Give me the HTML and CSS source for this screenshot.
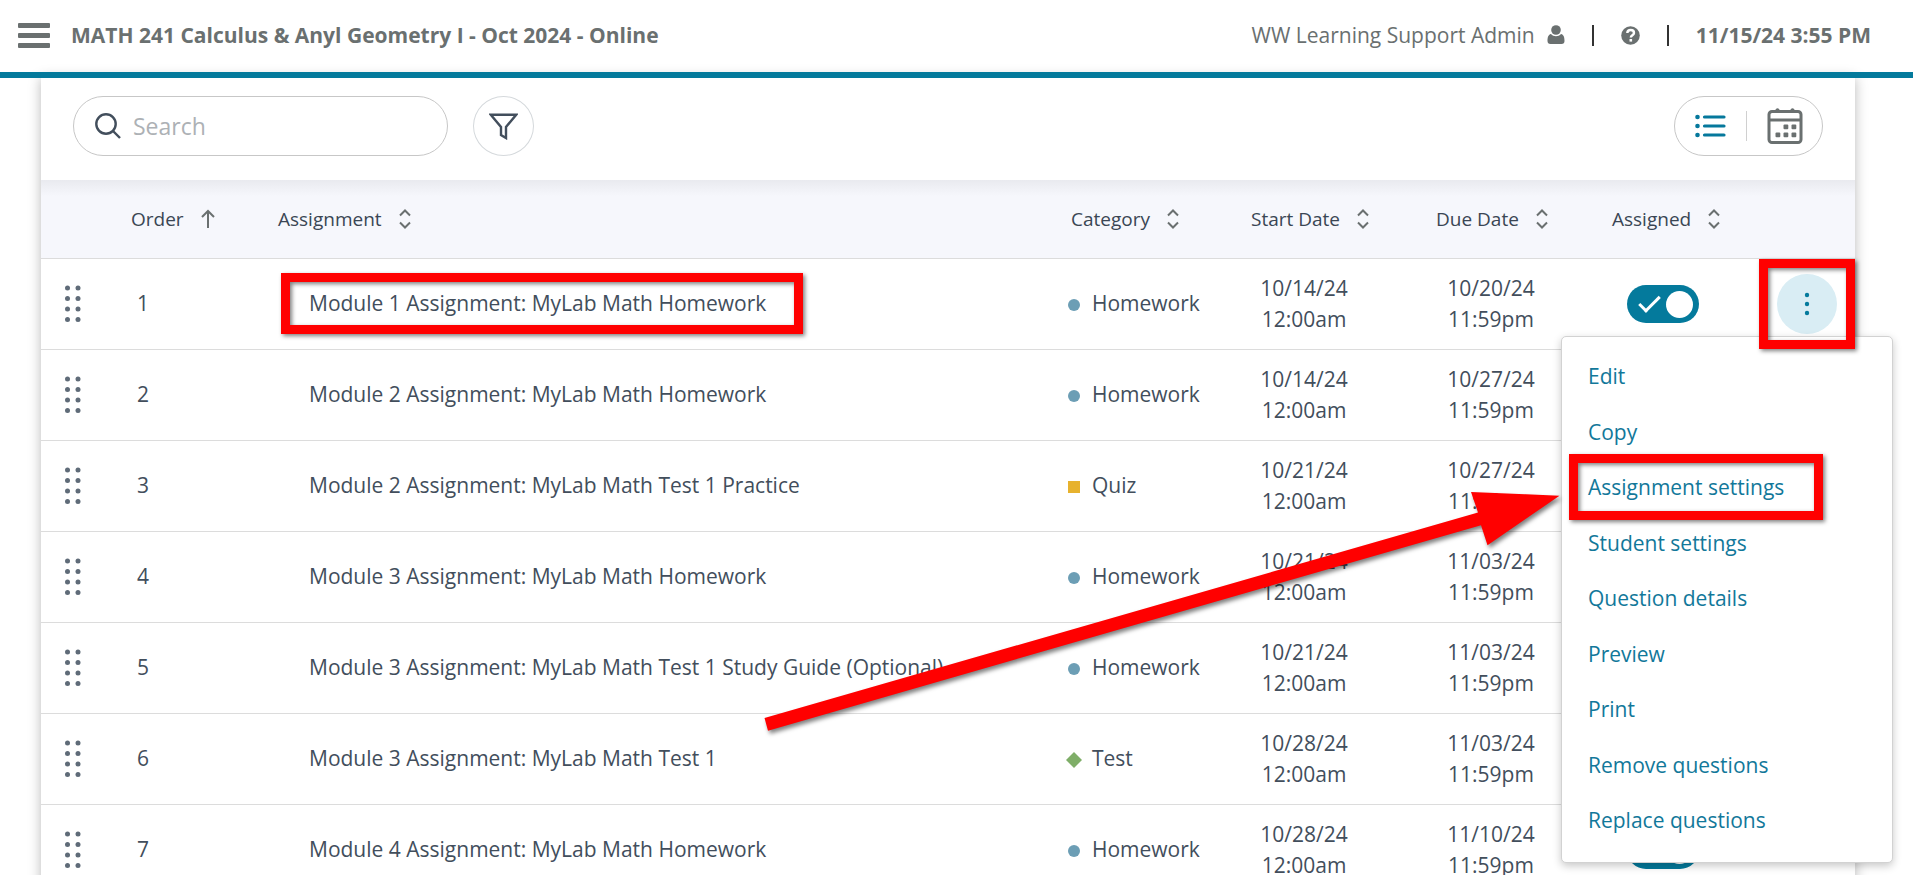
FILE: index.html
```html
<!DOCTYPE html>
<html lang="en">
<head>
<meta charset="utf-8">
<title>Assignment Manager</title>
<link rel="stylesheet" href="styles.css">
</head>
<body>
<svg class="sprite" aria-hidden="true">
  <symbol id="sort" viewBox="0 0 12 20"><path d="M1 6.500 6 1.500l5 5M1 13.500l5 5 5-5" fill="none" stroke="currentColor" stroke-width="2"/></symbol>
  <symbol id="grip" viewBox="0 0 16 38"><g fill="#5f6b78"><circle cx="2.500" cy="3" r="2.500"/><circle cx="13" cy="3" r="2.500"/><circle cx="2.500" cy="13.500" r="2.500"/><circle cx="13" cy="13.500" r="2.500"/><circle cx="2.500" cy="24" r="2.500"/><circle cx="13" cy="24" r="2.500"/><circle cx="2.500" cy="34.500" r="2.500"/><circle cx="13" cy="34.500" r="2.500"/></g></symbol>
  <symbol id="dots" viewBox="0 0 60 60"><circle cx="30" cy="21" r="2.200"/><circle cx="30" cy="30" r="2.200"/><circle cx="30" cy="39" r="2.200"/></symbol>
</svg>
<header class="topbar">
  <button class="menu-button" aria-label="Menu"><span></span><span></span><span></span></button>
  <h1>MATH 241 Calculus &amp; Anyl Geometry I - Oct 2024 - Online</h1>
  <div class="account">
    <a class="user" href="#">WW Learning Support Admin
      <svg width="18" height="20" viewBox="0 0 18 20"><circle cx="9" cy="5" r="4.800"/><path d="M4 9C1 9.500.5 13 .5 16c0 2 1 3 3 3h11c2 0 3-1 3-3 0-3-.5-6.500-3.500-7-2.500 3-7.500 3-10 0z"/></svg></a>
    <span class="bar"></span>
    <a class="help" href="#" aria-label="Help"><svg width="19" height="19" viewBox="0 0 19 19"><circle cx="9.500" cy="9.500" r="9.300"/><path d="M6.300 7c.2-4 6.700-4 6.700 0 0 2.300-3.200 2.300-3.200 4.500" fill="none" stroke="#fff" stroke-width="2.400"/><path d="M8.500 13h2.600v2.600H8.500z" fill="#fff"/></svg></a>
    <span class="bar"></span>
    <time>11/15/24 3:55 PM</time>
  </div>
</header>
<main class="panel">
  <div class="toolbar">
    <label class="search">
      <svg width="26" height="26" viewBox="0 0 26 26" fill="none" stroke="currentColor" stroke-width="2.400"><circle cx="11" cy="11" r="9.700"/><path d="m18 18 7 7"/></svg>
      <input type="search" placeholder="Search" aria-label="Search">
    </label>
    <button class="filter" aria-label="Filter"><svg width="29" height="27" viewBox="0 0 29 27" fill="none" stroke="currentColor" stroke-width="2.400"><path d="M1.800 1.700h25.400L17 14v11l-5-3v-8z"/></svg></button>
    <div class="views">
      <button aria-label="List view"><svg width="31" height="24" viewBox="0 0 31 24"><g fill="#05789c"><circle cx="2.500" cy="3" r="2.300"/><circle cx="2.500" cy="12" r="2.300"/><circle cx="2.500" cy="21" r="2.300"/></g><path d="M9.500 3h19.500M9.500 12h19.500M9.500 21h19.500" stroke="#05789c" stroke-width="3.200" stroke-linecap="round"/></svg></button>
      <button aria-label="Calendar view"><svg width="36" height="36" viewBox="0 0 36 36"><rect x="2" y="3.500" width="32" height="31" rx="3" fill="none" stroke="#6a7070" stroke-width="3"/><path d="M2 12h32" stroke="#6a7070" stroke-width="3"/><path d="M8 4c0-5 5-5 5 0zM23 4c0-5 5-5 5 0z" fill="#6a7070"/><g fill="#6a7070"><rect x="16.500" y="16.500" width="4.800" height="4.800" rx="1"/><rect x="24.500" y="16.500" width="4.800" height="4.800" rx="1"/><rect x="8.500" y="24.500" width="4.800" height="4.800" rx="1"/><rect x="16.500" y="24.500" width="4.800" height="4.800" rx="1"/><rect x="24.500" y="24.500" width="4.800" height="4.800" rx="1"/></g></svg></button>
    </div>
  </div>
  <table class="assignments">
    <colgroup><col class="c-grip"><col class="c-order"><col><col class="c-category"><col class="c-start"><col class="c-due"><col class="c-assigned"><col class="c-actions"></colgroup>
    <thead>
      <tr>
        <th></th>
        <th><button>Order <svg width="14" height="20" viewBox="0 0 14 20"><path d="M7 19V2M1 8l6-6 6 6" fill="none" stroke="currentColor" stroke-width="2"/></svg></button></th>
        <th><button>Assignment <svg width="12" height="20"><use href="#sort"/></svg></button></th>
        <th><button>Category <svg width="12" height="20"><use href="#sort"/></svg></button></th>
        <th><button>Start Date <svg width="12" height="20"><use href="#sort"/></svg></button></th>
        <th><button>Due Date <svg width="12" height="20"><use href="#sort"/></svg></button></th>
        <th><button>Assigned <svg width="12" height="20"><use href="#sort"/></svg></button></th>
        <th></th>
      </tr>
    </thead>
    <tbody id="rows"></tbody>
  </table>
</main>
<svg class="arrow" width="800" height="245" viewBox="764 491 800 245"><path d="M764.500 718 1478 512.500l-7-20.500 88.500 3.700-72 49.500-6.500-20L768 730.700z" fill="#f00"/></svg>
<script src="rows.js"></script>
</body>
</html>
```
FILE: styles.css
```css
* { box-sizing: border-box; }
body { margin: 0; height: 100vh; overflow: hidden; position: relative; background: #fff; color: #424e5c; font-family: "Open Sans", sans-serif; font-size: 21px; }
button, input { font: inherit; color: inherit; background: none; border: 0; padding: 0; }
a { color: inherit; text-decoration: none; }
svg { display: block; flex: none; }
.sprite { position: absolute; width: 0; height: 0; }

.topbar { display: flex; align-items: center; height: 78px; padding: 0 42px 2px 18px; border-bottom: 6px solid #047a9c; color: #6a7070; position: relative; z-index: 1; }
.menu-button { display: grid; gap: 5px; margin-right: 21px; }
.menu-button span { width: 32px; height: 5px; border-radius: 1px; background: #6a7070; }
.topbar h1 { margin: 0; font-size: 21px; font-weight: 700; }
.account { display: flex; align-items: center; margin-left: auto; }
.account svg { fill: #6a7070; }
.user { display: flex; align-items: center; gap: 12px; }
.bar { width: 2px; height: 21px; background: #333; margin: 0 27px; }
.account time { font-weight: 700; }

.panel { margin: 0 58px 0 41px; box-shadow: 0 0 12px rgba(0, 0, 0, .28); }
.toolbar { display: flex; align-items: center; height: 102px; padding: 0 32px 6px 32px; }
.search { display: flex; align-items: center; gap: 12px; width: 375px; height: 60px; padding: 0 21px; border: 1px solid #c7c7c7; border-radius: 30px; }
.search input { flex: 1; min-width: 0; outline: 0; font-size: 23px; }
.search input::placeholder { color: #adb1b5; opacity: 1; }
.filter { display: grid; place-items: center; width: 61px; height: 60px; margin-left: 25px; border: 1px solid #d5d9dc; border-radius: 50%; }
.views { display: flex; align-items: center; height: 60px; margin-left: auto; border: 1px solid #c7c7c7; border-radius: 30px; }
.views button { display: grid; place-content: center; width: 71px; height: 30px; }
.views button + button { width: 76px; border-left: 1px solid #d0d0d0; }

.assignments { width: 100%; table-layout: fixed; border-collapse: collapse; }
.c-grip { width: 90px; } .c-order { width: 147px; } .c-category { width: 180px; } .c-start { width: 185px; }
.c-due { width: 176px; } .c-assigned { width: 147px; } .c-actions { width: 96px; }
th, td { padding: 0; text-align: left; font-weight: 400; border-bottom: 1px solid #dcdcdc; }
thead tr { background: linear-gradient(#e9eaef, #f6f7fc 16px); }
th { height: 78px; }
th button { display: flex; align-items: center; gap: 17px; font-size: 19px; font-weight: 500; color: #3a4654; }
th svg { color: #6a7070; }
td { height: 91px; }
.grip { padding-left: 24px; }
.order { padding: 0 0 2px 6px; }
.title { padding-bottom: 2px; }
.title a { position: relative; margin-left: 31px; }
.category { display: flex; align-items: center; gap: 9px; margin-left: -6px; padding-bottom: 2px; }
.dates { width: 106px; text-align: center; line-height: 31px; padding-top: 1px; }
.due { width: 110px; }

.switch { appearance: none; display: block; width: 72px; height: 38px; margin: 0 0 0 15px; border-radius: 19px; background: #047a9c; position: relative; }
.switch::before { content: ""; position: absolute; left: 12px; top: 11px; width: 18px; height: 8px; border: solid #fff; border-width: 0 0 3px 3px; transform: rotate(-45deg); }
.switch::after { content: ""; position: absolute; right: 6px; top: 6px; width: 27px; height: 27px; border-radius: 50%; background: #fff; }
.actions { position: relative; display: grid; place-items: center; }
.more { width: 60px; height: 60px; border-radius: 50%; }
.more[aria-expanded=true] { background: #d9edf4; }
.more svg { fill: #047a9c; }
.menu { position: absolute; z-index: 2; top: 62px; right: -38px; width: 332px; margin: 0; padding: 12px 26px 14px; list-style: none; background: #fff; border: 1px solid #d2d2d2; border-radius: 5px; box-shadow: 0 3px 8px rgba(0, 0, 0, .22); }
.menu li { display: flex; align-items: center; height: 55px; }
.menu li:nth-child(even) { height: 56px; }
.menu button { color: #12789a; }

.mark { position: absolute; border: 9px solid #f00; pointer-events: none; filter: drop-shadow(2px 2px 2px rgba(0, 0, 0, .5)); }
.mark-title { inset: -16px -37px -17px -28px; }
.mark-more { inset: -15px 0; z-index: 3; }
.setting { position: relative; }
.mark-setting { inset: -19px -39px -19px -19px; }
.arrow { position: absolute; left: 764px; top: 491px; z-index: 4; overflow: visible; pointer-events: none; filter: drop-shadow(2px 3px 2px rgba(0, 0, 0, .5)); }
```
FILE: rows.js
```js
const rows = [
  ["Module 1 Assignment: MyLab Math Homework", "Homework", "10/14/24", "10/20/24"],
  ["Module 2 Assignment: MyLab Math Homework", "Homework", "10/14/24", "10/27/24"],
  ["Module 2 Assignment: MyLab Math Test 1 Practice", "Quiz", "10/21/24", "10/27/24"],
  ["Module 3 Assignment: MyLab Math Homework", "Homework", "10/21/24", "11/03/24"],
  ["Module 3 Assignment: MyLab Math Test 1 Study Guide (Optional)", "Homework", "10/21/24", "11/03/24"],
  ["Module 3 Assignment: MyLab Math Test 1", "Test", "10/28/24", "11/03/24"],
  ["Module 4 Assignment: MyLab Math Homework", "Homework", "10/28/24", "11/10/24"]
];
const shapes = {
  Homework: '<circle cx="9" cy="11" r="6" fill="#6c9eb5"/>',
  Quiz: '<path d="M3 5h12v12H3z" fill="#e7b22e"/>',
  Test: '<path d="m9 3 8 8-8 8-8-8z" fill="#7fae68"/>'
};
const menuItems = ["Edit", "Copy", "Assignment settings", "Student settings", "Question details", "Preview", "Print", "Remove questions", "Replace questions"];
const menu = `<ul class="menu">${menuItems.map(m => m === "Assignment settings"
  ? `<li><button class="setting">${m}<span class="mark mark-setting"></span></button></li>`
  : `<li><button>${m}</button></li>`).join("")}</ul><span class="mark mark-more"></span>`;

document.getElementById("rows").innerHTML = rows.map(([title, category, start, due], i) => `
  <tr>
    <td class="grip"><svg width="16" height="38"><use href="#grip"/></svg></td>
    <td class="order">${i + 1}</td>
    <td class="title"><a href="#">${title}${i ? "" : '<span class="mark mark-title"></span>'}</a></td>
    <td><div class="category"><svg width="18" height="18" viewBox="0 0 18 18" overflow="visible">${shapes[category]}</svg>${category}</div></td>
    <td><div class="dates">${start}<br>12:00am</div></td>
    <td><div class="dates due">${due}<br>11:59pm</div></td>
    <td><input class="switch" type="checkbox" role="switch" checked aria-label="Assigned"></td>
    <td><div class="actions"><button class="more" aria-label="More actions" aria-expanded="${!i}"><svg width="60" height="60"><use href="#dots"/></svg></button>${i ? "" : menu}</div></td>
  </tr>`).join("");
```
